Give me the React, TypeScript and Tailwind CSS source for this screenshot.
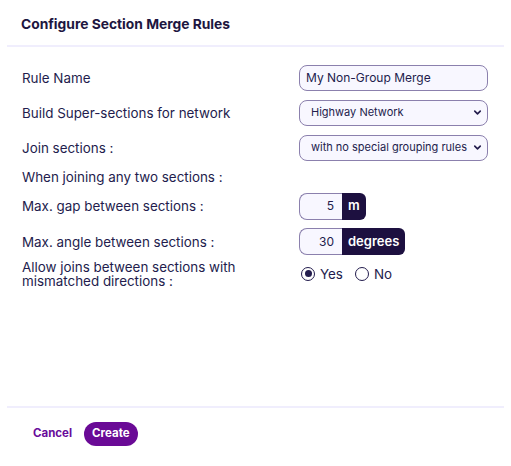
import { ChevronDown } from 'lucide-react'

const font = { fontFamily: 'Inter, "Noto Sans", sans-serif' }

function Row({ label, children, className = 'h-[35px]' }: { label: React.ReactNode; children?: React.ReactNode; className?: string }) {
  return (
    <div className={`flex items-center justify-between ${className}`}>
      <div className="text-[13.4px] leading-[14px] text-[#231c4d] whitespace-nowrap">{label}</div>
      {children}
    </div>
  )
}

function SelectBox({ value }: { value: string }) {
  return (
    <div className="w-[189px] h-[26px] flex items-center justify-between pl-[11px] pr-[4px] border border-[#8b80ad] rounded-[8px] bg-[#f8f7ff] text-[11px] text-[#231c4d] whitespace-nowrap">
      <span>{value}</span>
      <ChevronDown size={11} strokeWidth={3.5} className="text-[#231c4d] shrink-0" />
    </div>
  )
}

function UnitInput({ value, unit }: { value: string; unit: string }) {
  return (
    <div className="w-[189px] flex">
      <div className="flex h-[27px]">
        <div className="w-[43px] flex items-center justify-end pr-[8px] border border-[#8b80ad] border-r-0 rounded-l-[8px] bg-[#f8f7ff] text-[12px] text-[#231c4d]">
          {value}
        </div>
        <div className="px-[6px] flex items-center rounded-r-[6px] bg-[#1d1040] text-white text-[13px] font-semibold">
          {unit}
        </div>
      </div>
    </div>
  )
}

function Radio({ label, checked }: { label: string; checked?: boolean }) {
  return (
    <label className="flex items-center gap-[5px] text-[13.4px] text-[#231c4d]">
      <span className="w-[14px] h-[14px] rounded-full border-[1.5px] border-[#231c4d] flex items-center justify-center">
        {checked && <span className="w-[7px] h-[7px] rounded-full bg-[#231c4d]" />}
      </span>
      {label}
    </label>
  )
}

export default function App() {
  return (
    <div style={font} className="w-[511px] h-[466px] bg-white flex flex-col">
      <div className="h-[47px] mx-[7px] px-[14px] pt-[4px] flex items-center border-b-2 border-[#f0eefd]">
        <h1 className="text-[13.8px] font-bold text-[#1d1640]">Configure Section Merge Rules</h1>
      </div>

      <div className="flex-1 pl-[22px] pr-[23px] pt-[13px]">
        <Row label="Rule Name">
          <div className="w-[189px] h-[26px] flex items-center px-[6px] border border-[#8b80ad] rounded-[8px] bg-[#f8f7ff] text-[12px] text-[#231c4d]">
            My Non-Group Merge
          </div>
        </Row>
        <Row label="Build Super-sections for network">
          <SelectBox value="Highway Network" />
        </Row>
        <Row label="Join sections :">
          <SelectBox value="with no special grouping rules" />
        </Row>
        <Row label="When joining any two sections :" className="h-[23px]" />
        <Row label="Max. gap between sections :" className="h-[36px]">
          <UnitInput value="5" unit="m" />
        </Row>
        <Row label="Max. angle between sections :" className="h-[35px]">
          <UnitInput value="30" unit="degrees" />
        </Row>
        <Row
          className="h-[30px]"
          label={
            <span className="block leading-[14px]">
              Allow joins between sections with
              <br />
              mismatched directions :
            </span>
          }
        >
          <div className="w-[189px] flex items-center gap-[12px] pl-[2px]">
            <Radio label="Yes" checked />
            <Radio label="No" />
          </div>
        </Row>
      </div>

      <div className="h-[60px] mx-[7px] px-[26px] pb-[6px] flex items-center gap-[12px] border-t-2 border-[#f0eefd]">
        <button className="text-[11.5px] font-bold text-[#6a0c9b]">Cancel</button>
        <button className="h-[24px] px-[8px] rounded-full bg-[#6a0a96] text-white text-[11.5px] font-bold">Create</button>
      </div>
    </div>
  )
}
